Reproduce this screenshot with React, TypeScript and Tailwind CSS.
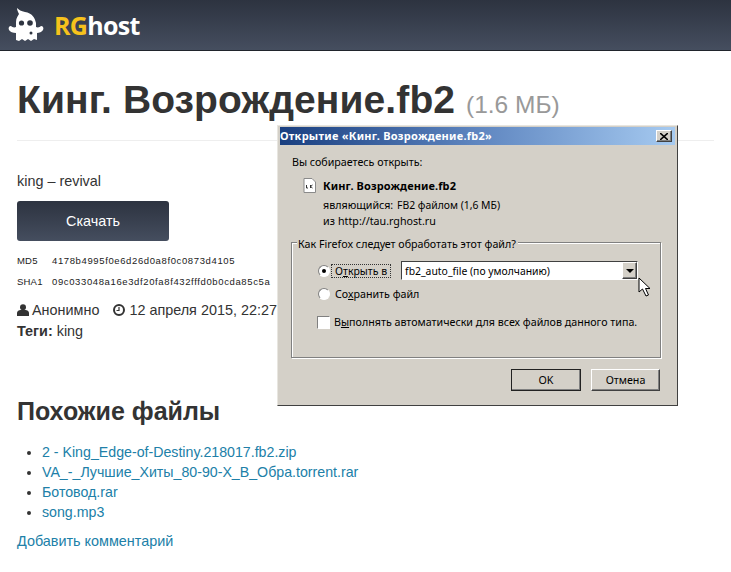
import React from "react";

function Ghost() {
  return (
    <svg width="36" height="34" viewBox="0 0 36 34" className="shrink-0">
      <path fill="#fff" d="M9 0 C11 2 13 3 17 4 C24 5 27 10 28 15 L28 19 C30 20 32 19 33 18 C35 18 36 20 35 22 C34 24 31 25 29 25 L29 32 L26 31 L23 33 L20 31 L17 33 L14 31 L11 33 L8 32 L8 25 C5 25 2 24 1 22 C0 20 1 18 3 18 C4 19 6 20 8 19 L8 14 C8 10 10 8 11 6 C10 4 9 2 9 0 Z" />
      <circle cx="13.5" cy="15" r="2.6" fill="#2f3541" />
      <circle cx="22" cy="15" r="2.8" fill="#2f3541" />
      <circle cx="23" cy="25" r="1.5" fill="#2f3541" />
    </svg>
  );
}

function Raised({ children, className = "" }: { children?: React.ReactNode; className?: string }) {
  return (
    <div className={"border border-t-white border-l-white border-r-[#404040] border-b-[#404040] bg-[#d4d0c8] shadow-[inset_-1px_-1px_0_#808080] flex items-center justify-center " + className}>
      {children}
    </div>
  );
}

function Radio({ on }: { on?: boolean }) {
  return (
    <span className="w-[12px] h-[12px] rounded-full bg-white border border-t-[#808080] border-l-[#808080] border-r-white border-b-white flex items-center justify-center shrink-0">
      {on && <span className="w-[4px] h-[4px] rounded-full bg-black" />}
    </span>
  );
}

function Dialog() {
  return (
    <div
      className="absolute left-[277px] top-[125px] w-[401px] h-[281px] bg-[#d4d0c8] border border-t-[#e8e6e0] border-l-[#e8e6e0] border-r-[#404040] border-b-[#404040] px-[2px] pt-[1px] text-[10.7px] leading-[14px] text-black"
      style={{ fontFamily: '"Noto Sans", "DejaVu Sans", sans-serif' }}
    >
      <div className="h-[18px] bg-gradient-to-r from-[#1a3f80] via-[#5f86c0] to-[#a6caf0] flex items-center justify-between pr-[3px]">
        <span className="text-white font-bold text-[11px] tracking-[0.25px] whitespace-nowrap">Открытие «Кинг. Возрождение.fb2»</span>
        <Raised className="w-[16px] h-[12px]">
          <svg width="8" height="7" viewBox="0 0 8 7"><path d="M0 0 L8 7 M8 0 L0 7" stroke="#000" strokeWidth="1.6" /></svg>
        </Raised>
      </div>

      <div className="pl-[12px] pt-[10px]">Вы собираетесь открыть:</div>

      <div className="pl-[23px] mt-[9px] flex items-center gap-[7px]">
        <svg width="13" height="15" viewBox="0 0 13 15" className="shrink-0">
          <path d="M1 .5 H9 L12.5 4 V14.5 H1 Z" fill="#fff" stroke="#8a8a8a" />
          <path d="M3.5 7 V10 H5 M7.5 7 V10 M9.5 7 L7.5 8.5 L9.5 10" stroke="#333" fill="none" />
        </svg>
        <span className="font-bold text-[11px] tracking-[0.1px]">Кинг. Возрождение.fb2</span>
      </div>
      <div className="pl-[43px] mt-[5px] whitespace-nowrap flex"><span className="w-[74px]">являющийся:</span><span className="text-[10.4px]">FB2 файлом (1,6 МБ)</span></div>
      <div className="pl-[43px] mt-[2px] whitespace-nowrap flex"><span className="w-[15px]">из</span><span>http://tau.rghost.ru</span></div>

      <div className="relative ml-[11px] mr-[14px] mt-[14px] h-[116px] border border-[#808080] shadow-[1px_1px_0_#fff,inset_1px_1px_0_#fff]">
        <span className="absolute left-[5px] -top-[6px] bg-[#d4d0c8] pr-[2px] pl-[1px] whitespace-nowrap">Как Firefox следует обработать этот файл?</span>
        <div className="flex items-center pl-[26px] pt-[18px]">
          <Radio on />
          <span className="ml-[1px] px-[3px] border border-dotted border-[#333] whitespace-nowrap leading-[12px] text-[10.5px]">О<span className="underline">т</span>крыть в</span>
          <div className="relative ml-[10px] w-[237px] h-[19px] bg-white border border-t-[#404040] border-l-[#404040] border-r-white border-b-white flex items-center pl-[3px] text-[10.4px]">
            <span className="whitespace-nowrap">fb2_auto_file (по умолчанию)</span>
            <Raised className="absolute right-0 top-0 w-[15px] h-[17px]">
              <svg width="8" height="4" viewBox="0 0 8 4"><path d="M0 0 H8 L4 4 Z" fill="#000" /></svg>
            </Raised>
          </div>
        </div>
        <div className="flex items-center pl-[26px] mt-[7px]">
          <Radio />
          <span className="ml-[5px] whitespace-nowrap">Со<span className="underline">х</span>ранить файл</span>
        </div>
        <div className="flex items-center pl-[25px] mt-[14px]">
          <span className="w-[13px] h-[13px] bg-white border border-t-[#808080] border-l-[#808080] border-r-white border-b-white shrink-0" />
          <span className="ml-[4px] whitespace-nowrap">В<span className="underline">ы</span>полнять автоматически для всех файлов данного типа.</span>
        </div>
      </div>

      <div className="flex justify-end gap-[10px] pr-[15px] mt-[11px]">
        <Raised className="w-[70px] h-[22px] outline outline-1 outline-[#222] -outline-offset-1">OK</Raised>
        <Raised className="w-[69px] h-[22px]">Отмена</Raised>
      </div>

      <svg width="14" height="20" viewBox="0 0 14 20" className="absolute left-[360px] top-[151px]">
        <path d="M1 1 V15 L4.5 12 L8 19 L10.5 18 L7.5 11.5 L12 11.5 Z" fill="#fff" stroke="#000" strokeWidth="1" />
      </svg>
    </div>
  );
}

export default function App() {
  return (
    <div className="relative h-[572px] w-[731px] overflow-hidden bg-white text-[#333333] text-[14.4px] leading-[20px]" style={{ fontFamily: '"Liberation Sans", Arial, sans-serif' }}>
      <header className="h-[51px] bg-gradient-to-b from-[#2d3340] to-[#454e5f] border-b border-[#20242c] flex items-center pl-[8px] gap-[10px]">
        <Ghost />
        <span className="text-[25px] font-bold leading-none" style={{ fontFamily: '"Open Sans", sans-serif', letterSpacing: "-0.7px" }}>
          <span className="text-[#f6c21c]">RG</span><span className="text-white">host</span>
        </span>
      </header>

      <main className="pl-[17px] pr-[17px]">
        <h1 className="mt-[29px] text-[39px] leading-[40px] font-bold tracking-[0.1px] whitespace-nowrap pb-[15px] border-b border-[#eeeeee]">
          Кинг. Возрождение.fb2 <small className="text-[24.5px] font-normal text-[#999999] tracking-normal">(1.6 МБ)</small>
        </h1>
        <p className="mt-[30px]">king – revival</p>
        <button className="mt-[10px] w-[152px] h-[40px] rounded-[3px] bg-gradient-to-b from-[#2d3340] to-[#454e5f] text-white flex items-center justify-center">Скачать</button>

        <div className="mt-[9px] text-[9.5px] leading-[21px] tracking-[0.62px] text-[#222]">
          <div className="flex whitespace-nowrap"><span className="w-[35px] tracking-[0.2px]">MD5</span><span>4178b4995f0e6d26d0a8f0c0873d4105</span></div>
          <div className="flex whitespace-nowrap"><span className="w-[35px] tracking-[0.2px]">SHA1</span><span>09c033048a16e3df20fa8f432fffd0b0cda85c5a</span></div>
        </div>

        <div className="mt-[8px] flex items-center whitespace-nowrap">
          <svg width="12" height="12" viewBox="0 0 12 12" className="mr-[3px] shrink-0"><circle cx="6" cy="3.2" r="3" fill="#333" /><path d="M0 12 V9 C0 7 2 6 3.5 6 H8.5 C10 6 12 7 12 9 V12 Z" fill="#333" /></svg>
          Анонимно
          <svg width="12" height="12" viewBox="0 0 12 12" className="ml-[14px] mr-[4px] shrink-0"><circle cx="6" cy="6" r="5" fill="none" stroke="#333" strokeWidth="2" /><path d="M6 3 V6.5 H3.5" fill="none" stroke="#333" strokeWidth="1.2" /></svg>
          12 апреля 2015, 22:27
        </div>
        <div className="mt-[1px]"><b>Теги:</b> king</div>

        <h2 className="mt-[56px] text-[25px] leading-[28px] font-bold">Похожие файлы</h2>
        <ul className="mt-[17px] list-disc pl-[25px] text-[14.2px] text-[#2080a8] marker:text-[#333]">
          <li>2 - King_Edge-of-Destiny.218017.fb2.zip</li>
          <li>VA_-_Лучшие_Хиты_80-90-Х_В_Обра.torrent.rar</li>
          <li>Ботовод.rar</li>
          <li>song.mp3</li>
        </ul>
        <p className="mt-[9px] text-[#2080a8]">Добавить комментарий</p>
      </main>

      <Dialog />
    </div>
  );
}
